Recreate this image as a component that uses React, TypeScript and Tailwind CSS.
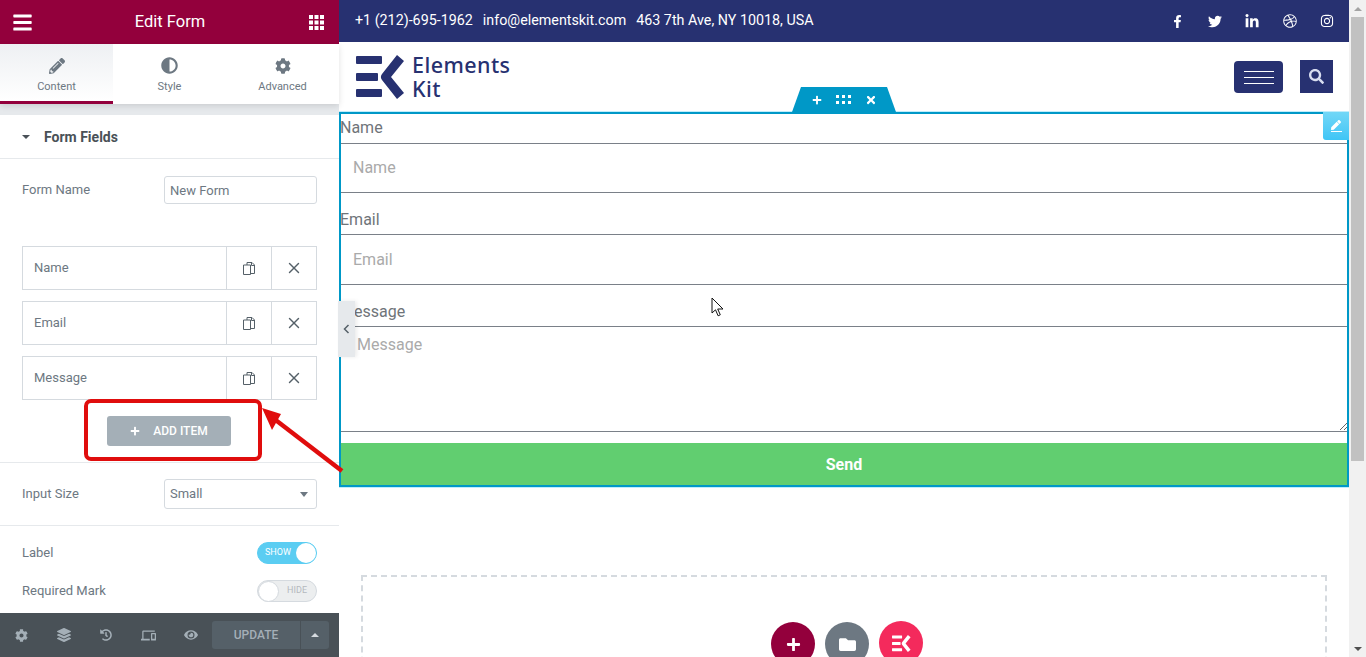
import { X } from "lucide-react";
import {
  FaAdjust,
  FaBars,
  FaCog,
  FaDribbble,
  FaEye,
  FaFacebookF,
  FaFolder,
  FaHistory,
  FaInstagram,
  FaLayerGroup,
  FaLinkedinIn,
  FaPen,
  FaPencilAlt,
  FaPlus,
  FaSearch,
  FaTimes,
  FaTwitter,
} from "react-icons/fa";
import { MdDevices } from "react-icons/md";

const TABS = [
  { label: "Content", icon: <FaPencilAlt size={16} />, active: true },
  { label: "Style", icon: <FaAdjust size={17} />, active: false },
  { label: "Advanced", icon: <FaCog size={16} />, active: false },
];

const FIELDS = ["Name", "Email", "Message"];

const SOCIALS = [
  <FaFacebookF key="fb" size={13} />,
  <FaTwitter key="tw" size={15} />,
  <FaLinkedinIn key="li" size={15} />,
  <FaDribbble key="dr" size={14} />,
  <FaInstagram key="ig" size={14} />,
];

const FOOTER_ICONS = [
  <FaCog key="cog" size={13} />,
  <FaLayerGroup key="layers" size={14} />,
  <FaHistory key="history" size={12} />,
  <MdDevices key="devices" size={15} />,
  <FaEye key="eye" size={14} />,
];

function GridIcon() {
  return (
    <svg width="15" height="15" viewBox="0 0 15 15" fill="currentColor">
      {[0, 5.5, 11].map((y) =>
        [0, 5.5, 11].map((x) => <rect key={`${x}-${y}`} x={x} y={y} width="4" height="4" />)
      )}
    </svg>
  );
}

function DragDots() {
  return (
    <svg width="15" height="9" viewBox="0 0 15 9" fill="currentColor">
      {[0, 6].map((y) =>
        [0, 6, 12].map((x) => <rect key={`${x}-${y}`} x={x} y={y} width="3" height="3" />)
      )}
    </svg>
  );
}

function CloneIcon() {
  return (
    <svg width="14" height="15" viewBox="0 0 14 15" fill="none" stroke="currentColor" strokeWidth="1">
      <path d="M5 4V1.5h5l2.5 2.5v8.5H8.5" />
      <path d="M9.5 1.5v3h3" />
      <path d="M1.5 4h7v9.5h-7z" />
    </svg>
  );
}

function EkLogo({ className = "" }: { className?: string }) {
  return (
    <svg viewBox="0 0 49 44" fill="currentColor" className={className}>
      <rect x="0" y="1" width="26" height="8" rx="1" />
      <rect x="0" y="18" width="22" height="8" rx="1" />
      <rect x="0" y="34" width="26" height="8" rx="1" />
      <path d="M41 0l7 6-13 16 13 16-7 6-15-19a5 5 0 0 1 0-6z" />
    </svg>
  );
}

function Toggle({ on }: { on: boolean }) {
  return (
    <div
      className={`flex h-[22px] w-[60px] items-center rounded-full border ${
        on ? "justify-between border-[#5bcdf2] bg-[#5bcdf2] pl-[7px]" : "border-[#d5dadf] bg-[#eceeef] pr-[9px]"
      }`}
    >
      {!on && <div className="h-[21px] w-[21px] rounded-full border border-[#d5dadf] bg-white" />}
      <span className={`text-[9px] ${on ? "text-white" : "ml-auto text-[#b4b9be]"}`}>{on ? "SHOW" : "HIDE"}</span>
      {on && <div className="h-[20px] w-[20px] rounded-full bg-white" />}
    </div>
  );
}

function Sidebar() {
  return (
    <aside className="flex h-full w-[339px] shrink-0 flex-col bg-white text-[13px] text-[#6d7882]">
      <div className="flex h-[44px] shrink-0 items-center justify-between bg-[#93003c] pl-[12px] pr-[15px] text-white">
        <FaBars size={21} />
        <span className="pr-[2px] pt-px text-[16.5px]">Edit Form</span>
        <GridIcon />
      </div>
      <div className="relative z-10 flex h-[60px] shrink-0 bg-white shadow-[0_2px_6px_rgba(0,0,0,0.12)]">
        {TABS.map((tab) => (
          <div
            key={tab.label}
            className={`flex flex-1 flex-col items-center pt-[13px] text-[11px] ${
              tab.active ? "border-b-[3px] border-[#93003c] bg-gradient-to-b from-[#eef0f3] to-white" : ""
            }`}
          >
            <span className="flex h-[17px] items-center text-[#6d7882]">{tab.icon}</span>
            <span className="mt-[6px] leading-[14px]">{tab.label}</span>
          </div>
        ))}
      </div>
      <div className="h-[11px] shrink-0 bg-[#e6e9ec]" />
      <div className="flex h-[44px] shrink-0 items-center border-b border-[#e6e9ec] pl-[22px] pt-px">
        <span className="mr-[14px] h-0 w-0 border-x-[4px] border-t-[4px] border-x-transparent border-t-[#495157]" />
        <span className="text-[14px] font-bold text-[#495157]">Form Fields</span>
      </div>
      <div className="flex h-[87px] shrink-0 items-start justify-between px-[22px] pt-[17px]">
        <span className="leading-[28px]">Form Name</span>
        <div className="flex h-[28px] w-[153px] items-center rounded-[3px] border border-[#d5dadf] pl-[5px] pt-px">
          New Form
        </div>
      </div>
      <div className="flex shrink-0 flex-col gap-[11px] px-[22px]">
        {FIELDS.map((field) => (
          <div key={field} className="flex h-[44px] border border-[#d5dadf]">
            <div className="flex flex-1 items-center pl-[11px]">{field}</div>
            <div className="flex w-[45px] items-center justify-center border-l border-[#d5dadf] text-[#556068]">
              <CloneIcon />
            </div>
            <div className="flex w-[45px] items-center justify-center border-l border-[#d5dadf] text-[#556068]">
              <X size={18} strokeWidth={1.9} />
            </div>
          </div>
        ))}
      </div>
      <div className="flex h-[63px] shrink-0 items-start justify-center border-b border-[#e6e9ec] pr-px pt-[16px]">
        <div className="flex h-[30px] w-[124px] items-center justify-center gap-[13px] rounded-[3px] bg-[#a4afb7] text-[12px] font-medium text-white">
          <FaPlus size={10} />
          <span>ADD ITEM</span>
        </div>
      </div>
      <div className="flex h-[63px] shrink-0 items-start justify-between border-b border-[#e6e9ec] px-[22px] pt-[16px]">
        <span className="leading-[30px]">Input Size</span>
        <div className="flex h-[30px] w-[153px] items-center justify-between rounded-[3px] border border-[#d5dadf] pl-[5px] pr-[8px]">
          <span>Small</span>
          <span className="h-0 w-0 border-x-[4px] border-t-[5px] border-x-transparent border-t-[#6d7882]" />
        </div>
      </div>
      <div className="flex flex-1 flex-col gap-[16px] px-[22px] pt-[16px]">
        <div className="flex items-center justify-between">
          <span>Label</span>
          <Toggle on />
        </div>
        <div className="flex items-center justify-between">
          <span>Required Mark</span>
          <Toggle on={false} />
        </div>
      </div>
      <div className="flex h-[44px] shrink-0 items-center bg-[#495157] pr-[10px] text-[#a4afb7]">
        <div className="flex w-[212px] items-center">
          {FOOTER_ICONS.map((icon) => (
            <span key={icon.key} className="flex w-[42.5px] justify-center">
              {icon}
            </span>
          ))}
        </div>
        <div className="flex h-[28px] flex-1 items-center rounded-[3px] bg-[#556068] text-[12px] font-medium">
          <span className="flex-1 text-center">UPDATE</span>
          <span className="flex h-full w-[29px] items-center justify-center border-l border-[#495157]">
            <span className="h-0 w-0 border-x-[4px] border-b-[4px] border-x-transparent border-b-[#d5dadf]" />
          </span>
        </div>
      </div>
    </aside>
  );
}

function TopBar() {
  return (
    <div className="flex h-[42px] shrink-0 items-center justify-between bg-[#273171] pl-4 pr-[15px] text-[14.3px] text-white">
      <div className="flex gap-[10px]">
        <span>+1 (212)-695-1962</span>
        <span>info@elementskit.com</span>
        <span>463 7th Ave, NY 10018, USA</span>
      </div>
      <div className="flex items-center gap-[23.5px]">
        {SOCIALS.map((icon) => (
          <span key={icon.key} className="flex w-[14px] justify-center">
            {icon}
          </span>
        ))}
      </div>
    </div>
  );
}

function SiteHeader() {
  return (
    <div className="flex h-[70px] shrink-0 items-start justify-between pl-[17px] pr-[16px] pt-[13px]">
      <div className="flex gap-[7px] text-[#273171]">
        <EkLogo className="h-[44px] w-[49px]" />
        <div className="-mt-[2px] font-['Noto_Sans',sans-serif] text-[21.5px] font-medium leading-[24px] tracking-[0.02em]">
          Elements
          <br />
          Kit
        </div>
      </div>
      <div className="flex items-start gap-[17px] pt-[5px]">
        <div className="mt-px flex h-[32px] w-[49px] flex-col items-center justify-center gap-[5px] rounded-[4px] bg-[#273171]">
          <span className="h-px w-[30px] bg-white" />
          <span className="h-px w-[30px] bg-white" />
          <span className="h-px w-[30px] bg-white" />
        </div>
        <div className="flex h-[33px] w-[33px] items-center justify-center bg-[#273171] text-[#d8ddf0]">
          <FaSearch size={15} />
        </div>
      </div>
    </div>
  );
}

function FormWidget() {
  return (
    <div className="relative shrink-0 pb-[1px] text-[16px] text-[#6f7479]">
      <div className="flex h-[31px] items-end pl-px leading-[30px]">Name</div>
      <input
        placeholder="Name"
        className="block h-[50px] w-full border border-[#7a8088] pb-[2px] pl-[13px] placeholder:text-[#aaaaaa]"
      />
      <div className="mt-[10px] flex h-[31px] items-end pl-px leading-[28px]">Email</div>
      <input
        placeholder="Email"
        className="block h-[51px] w-full border border-[#7a8088] pl-[13px] placeholder:text-[#aaaaaa]"
      />
      <div className="mt-[10px] flex h-[31px] items-end pl-px leading-[28px]">Message</div>
      <textarea
        placeholder="Message"
        className="block h-[106px] w-full border border-[#7a8088] pl-[17px] pt-[6px] placeholder:text-[#aaaaaa]"
      />
      <div className="mt-[11px] flex h-[43px] items-center justify-center bg-[#61ce70] font-bold text-white">Send</div>

      {/* editor outline and handles */}
      <div className="pointer-events-none absolute inset-0 border-2 border-[#0098c7] shadow-[0_0_0_1px_rgba(113,215,247,0.45)]" />
      <div className="absolute left-[453px] top-[-25px] flex h-[25px] w-[104px] items-center justify-center gap-[14px] bg-[#0098c7] text-white [clip-path:polygon(0_100%,9px_0,95px_0,100%_100%)]">
        <FaPlus size={10} />
        <DragDots />
        <FaTimes size={12} />
      </div>
      <div className="absolute right-0 top-0 flex h-[28px] w-[26px] flex-col items-center justify-center gap-[1px] rounded-bl-[3px] bg-gradient-to-b from-[#71d7f7] to-[#3ec5f6] text-white">
        <FaPen size={10} />
        <span className="h-px w-[11px] bg-white" />
      </div>
    </div>
  );
}

function BlankDrop() {
  return (
    <div className="mx-[22px] mt-[88px] flex h-[200px] shrink-0 justify-center gap-[10px] border-2 border-dashed border-[#d5dadf] pl-[6px] pt-[45px]">
      <div className="flex h-[44px] w-[44px] items-center justify-center rounded-full bg-[#93003c] text-white">
        <FaPlus size={15} />
      </div>
      <div className="flex h-[44px] w-[44px] items-center justify-center rounded-full bg-[#6d7882] text-white">
        <FaFolder size={17} />
      </div>
      <div className="-mt-px flex h-[44px] w-[44px] items-center justify-center rounded-full bg-[#f42a5c] text-white">
        <EkLogo className="h-[17px] w-[19px]" />
      </div>
    </div>
  );
}

function Scrollbar() {
  return (
    <div className="flex h-full w-[17px] shrink-0 flex-col items-center bg-[#f1f1f1]">
      <div className="flex h-[17px] shrink-0 items-center justify-center">
        <span className="h-0 w-0 border-x-[4px] border-b-[4px] border-x-transparent border-b-[#a3a3a3]" />
      </div>
      <div className="h-[444px] w-[13px] shrink-0 bg-[#c1c1c1]" />
      <div className="mt-auto flex h-[17px] shrink-0 items-center justify-center">
        <span className="h-0 w-0 border-x-[4px] border-t-[4px] border-x-transparent border-t-[#505050]" />
      </div>
    </div>
  );
}

export default function App() {
  return (
    <div className="relative flex h-screen w-screen overflow-hidden bg-white font-['Roboto',sans-serif]">
      <Sidebar />
      <main className="flex h-full min-w-0 flex-1 flex-col overflow-hidden">
        <TopBar />
        <SiteHeader />
        <FormWidget />
        <BlankDrop />
      </main>
      <Scrollbar />

      {/* panel collapse tab */}
      <div className="absolute left-[338px] top-[301px] flex h-[56px] w-[17px] items-center justify-center bg-[#e6e9ec] text-[#556068] shadow-[2px_0_4px_rgba(0,0,0,0.08)]">
        <svg width="7" height="10" viewBox="0 0 7 10" fill="none" stroke="currentColor" strokeWidth="1.5">
          <path d="M5.5 1 1.5 5l4 4" />
        </svg>
      </div>

      {/* annotation */}
      <div className="pointer-events-none absolute left-[84px] top-[399px] h-[62px] w-[178px] rounded-[7px] border-[4px] border-[#e00d0d]" />
      <svg className="pointer-events-none absolute left-[255px] top-[400px]" width="95" height="80" viewBox="0 0 95 80" fill="none">
        <path d="M87 71 18 18" stroke="#e00d0d" strokeWidth="4.5" />
        <path d="M7 8 26 14 17 30z" fill="#e00d0d" />
      </svg>

      {/* mouse pointer */}
      <svg className="pointer-events-none absolute left-[711px] top-[297px]" width="13" height="20" viewBox="0 0 13 20">
        <path d="M1 1v15l3.5-3.2 2.6 6 2.2-1-2.6-5.8H12z" fill="#fff" stroke="#111" strokeWidth="1" />
      </svg>
    </div>
  );
}
